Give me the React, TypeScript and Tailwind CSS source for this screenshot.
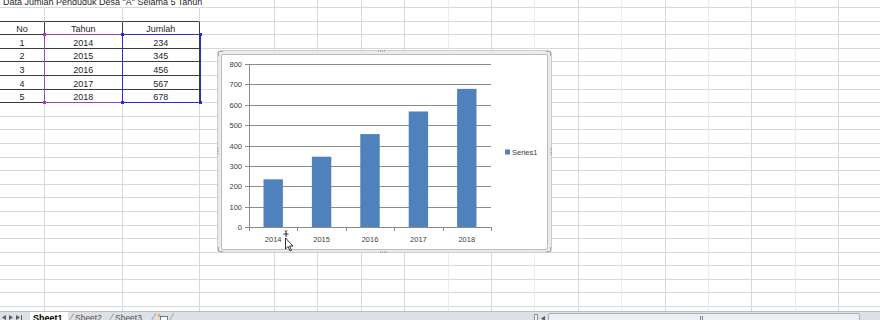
import React from "react";

const WIDTHS = [
  "w-[45px]",
  "w-[77.5px]",
  "w-[77.5px]",
  "w-[75px]",
  ...Array(14).fill("w-[43.4px]"),
];
const LIGHT_COLS = new Set([7, 9, 11, 13, 15]);
const ROW_COUNT = 24;

const DATA = [
  ["1", "2014", "234"],
  ["2", "2015", "345"],
  ["3", "2016", "456"],
  ["4", "2017", "567"],
  ["5", "2018", "678"],
];

function cellText(r: number, c: number): string {
  if (r === 2) return ["No", "Tahun", "Jumlah"][c] ?? "";
  if (r >= 3 && r <= 7 && c <= 2) return DATA[r - 3][c];
  return "";
}

function cellClass(r: number, c: number): string {
  const inTable = r >= 2 && r <= 7 && c <= 2;
  let right = LIGHT_COLS.has(c) ? "border-r-[#ececec]" : "border-r-[#d8d8d8]";
  let bottom = "border-b-[#d8d8d8]";
  if (inTable) {
    right = "border-r-[#3c3c3c]";
    bottom = "border-b-[#3c3c3c]";
  }
  if (r === 1 && c <= 2) bottom = "border-b-[#3c3c3c]";
  if (r === 0 && c <= 2) right = "border-r-transparent";
  return `${WIDTHS[c]} ${right} ${bottom}`;
}

function Sheet() {
  return (
    <div className="relative h-[311px] overflow-hidden">
      <div className="mt-[-5.6px]">
        {Array.from({ length: ROW_COUNT }).map((_, r) => (
          <div key={r} className="flex h-[13.6px]">
            {WIDTHS.map((_, c) => (
              <div
                key={c}
                className={`relative flex h-full shrink-0 items-end justify-center border-r border-b leading-[10px] text-[#1e1e1e] ${cellClass(r, c)}`}
              >
                {r === 0 && c === 0 ? (
                  <span className="absolute bottom-0 left-[3px] whitespace-nowrap">
                    Data Jumlah Penduduk Desa "A" Selama 5 Tahun
                  </span>
                ) : (
                  cellText(r, c)
                )}
              </div>
            ))}
          </div>
        ))}
      </div>

      {/* range highlights for the chart's source data */}
      <div className="absolute left-[44px] top-[34.2px] h-[69px] w-[78.5px] border border-[#a23fc0]" />
      <div className="absolute left-[121.5px] top-[34.2px] h-[69px] w-[79px] border border-[#2a2fc8]" />
      <span className="absolute left-[43px] top-[33.2px] h-[3px] w-[3px] bg-[#a23fc0]" />
      <span className="absolute left-[43px] top-[101.2px] h-[3px] w-[3px] bg-[#a23fc0]" />
      <span className="absolute left-[120.5px] top-[33.2px] h-[3px] w-[3px] bg-[#2a2fc8]" />
      <span className="absolute left-[120.5px] top-[101.2px] h-[3px] w-[3px] bg-[#2a2fc8]" />
      <span className="absolute left-[198.5px] top-[33.2px] h-[3px] w-[3px] bg-[#2a2fc8]" />
      <span className="absolute left-[198.5px] top-[101.2px] h-[3px] w-[3px] bg-[#2a2fc8]" />

      <Chart />
    </div>
  );
}

const VALUES = [234, 345, 456, 567, 678];
const YEARS = ["2014", "2015", "2016", "2017", "2018"];

function Chart() {
  const x0 = 249;
  const x1 = 491;
  const yZero = 227;
  const k = 163 / 800;
  const cat = (x1 - x0) / 5;
  const barW = 19.4;
  const font = "'Liberation Sans', Arial, sans-serif";

  return (
    <div className="absolute left-[217px] top-[50px] h-[203px] w-[335px] rounded-[4px] border border-[#cdcdcd] bg-[#ebebeb] p-[3px] pb-[2px]">
      <div className="h-full w-full rounded-[2px] border border-[#bdbdbd] bg-white" />
      <svg
        className="pointer-events-none absolute left-[-1px] top-[-1px]"
        width={335}
        height={203}
        viewBox="217 50 335 203"
      >
        {/* frame handles */}
        <g fill="#8a8a8a">
          {[378, 380, 382, 384].map((x) => (
            <rect key={`t${x}`} x={x} y={50.5} width={1} height={1} />
          ))}
          {[380, 382, 384, 386].map((x) => (
            <rect key={`b${x}`} x={x} y={251.5} width={1} height={1} />
          ))}
          {[147, 149, 151, 153].map((y) => (
            <rect key={`l${y}`} x={217.5} y={y} width={1} height={1} />
          ))}
          {[148, 150, 152, 154].map((y) => (
            <rect key={`r${y}`} x={550.5} y={y} width={1} height={1} />
          ))}
        </g>
        <g stroke="#a8a8a8" fill="none" strokeWidth={1}>
          <path d="M218.5 56 V51.5 H223" />
          <path d="M546 51.5 H550.5 V56" />
          <path d="M218.5 247 V251.5 H223" />
          <path d="M546 251.5 H550.5 V247" />
        </g>

        {/* gridlines + y labels */}
        {Array.from({ length: 9 }).map((_, i) => {
          const v = i * 100;
          const y = Math.round(yZero - v * k) + 0.5;
          return (
            <g key={v}>
              <line x1={x0} x2={x1} y1={y} y2={y} stroke="#8c8c8c" strokeWidth={1} />
              <line x1={245} x2={x0} y1={y} y2={y} stroke="#8c8c8c" strokeWidth={1} />
              <text
                x={242}
                y={y + 2.6}
                textAnchor="end"
                fontSize={7.5}
                fontFamily={font}
                fill="#404040"
              >
                {v}
              </text>
            </g>
          );
        })}
        <line x1={x0 + 0.5} x2={x0 + 0.5} y1={64} y2={yZero + 1} stroke="#8c8c8c" />
        {Array.from({ length: 6 }).map((_, i) => {
          const x = Math.round(x0 + i * cat) + 0.5;
          return <line key={i} x1={x} x2={x} y1={yZero} y2={yZero + 4} stroke="#8c8c8c" />;
        })}

        {/* bars */}
        {VALUES.map((v, i) => {
          const cx = x0 + cat * (i + 0.5);
          const h = v * k;
          return (
            <rect key={i} x={cx - barW / 2} y={yZero - h} width={barW} height={h} fill="#4f81bd" />
          );
        })}
        {YEARS.map((y, i) => (
          <text
            key={y}
            x={x0 + cat * (i + 0.5)}
            y={242}
            textAnchor="middle"
            fontSize={7.5}
            fontFamily={font}
            fill="#404040"
          >
            {y}
          </text>
        ))}

        {/* legend */}
        <rect x={505} y={149.5} width={5} height={5} fill="#4f81bd" />
        <text x={512} y={154.5} fontSize={7.5} fontFamily={font} fill="#404040">
          Series1
        </text>

        {/* mouse cursor */}
        <g stroke="#000" strokeWidth={0.8} fill="none">
          <path d="M286 231 V237 M283.5 234 H288.5" />
          <path d="M285 230.5 L286 231.5 L287 230.5" />
        </g>
        <path
          d="M285.5 238 L285.5 249 L288 246.5 L290 251 L291.5 250.3 L289.6 246 L293 246 Z"
          fill="#fff"
          stroke="#000"
          strokeWidth={0.8}
        />
      </svg>
    </div>
  );
}

function Tri({ dir }: { dir: "l" | "r" }) {
  return (
    <svg width={4} height={5} viewBox="0 0 4 5">
      <path d={dir === "l" ? "M4 0 L0 2.5 L4 5 Z" : "M0 0 L4 2.5 L0 5 Z"} fill="#5a5a5a" />
    </svg>
  );
}

function Slash() {
  return (
    <svg width={6} height={10} viewBox="0 0 6 10" className="shrink-0">
      <line x1={0} y1={10} x2={6} y2={0} stroke="#9aa0a8" strokeWidth={1} />
    </svg>
  );
}

function TabBar() {
  return (
    <div className="flex h-[14px] items-start border-t border-[#b9bec5] bg-[#dde1e6] text-[8.5px] leading-[10px]">
      <div className="flex w-[30px] shrink-0 items-center gap-[3px] pl-[2px] pt-[3px]">
        <Tri dir="l" />
        <Tri dir="r" />
        <span className="flex items-center">
          <Tri dir="r" />
          <span className="ml-[0.5px] h-[5px] w-[1px] bg-[#5a5a5a]" />
        </span>
      </div>
      <div className="h-full w-[38px] shrink-0 bg-white pl-[3px] pt-[1px] text-[9px] font-bold text-black">
        Sheet1
      </div>
      <div className="flex w-[40px] shrink-0 items-start pt-[1px] text-[#505050]">
        <Slash />
        <span className="ml-[1px]">Sheet2</span>
      </div>
      <div className="flex w-[42px] shrink-0 items-start pt-[1px] text-[#505050]">
        <Slash />
        <span className="ml-[1px]">Sheet3</span>
      </div>
      <div className="flex w-[24px] shrink-0 items-start pt-[1px]">
        <Slash />
        <svg width={11} height={9} viewBox="0 0 11 9" className="ml-[1px]">
          <rect x={3.5} y={3.5} width={7} height={5} fill="#fff" stroke="#6b7a8f" />
          <path d="M2 0 L3 2 L5 2.5 L3 3 L2 5 L1 3 L-1 2.5 L1 2 Z" fill="#e6b422" />
        </svg>
        <Slash />
      </div>
      <div className="flex-1" />
      <div className="flex h-full w-[346px] shrink-0 items-start pt-[1px]">
        <span className="mt-[1px] h-[8px] w-[4px] border border-[#8d939b] bg-[#f4f5f7]" />
        <span className="ml-[3px] mt-[3px]">
          <Tri dir="l" />
        </span>
        <div className="ml-[3px] flex h-[12px] w-[312px] shrink-0 items-start justify-center rounded-[2px] border border-[#a9aeb5] bg-[#eceef1] pt-[2px]">
          <span className="ml-[-5px] flex gap-[1px]">
            <span className="h-[6px] w-[1px] bg-[#7b8088]" />
            <span className="h-[6px] w-[1px] bg-[#7b8088]" />
          </span>
        </div>
      </div>
    </div>
  );
}

export default function App() {
  return (
    <div className="relative h-[320px] w-[880px] overflow-hidden bg-white font-['Liberation_Sans',Arial,sans-serif] text-[9px]">
      <Sheet />
      <TabBar />
    </div>
  );
}
